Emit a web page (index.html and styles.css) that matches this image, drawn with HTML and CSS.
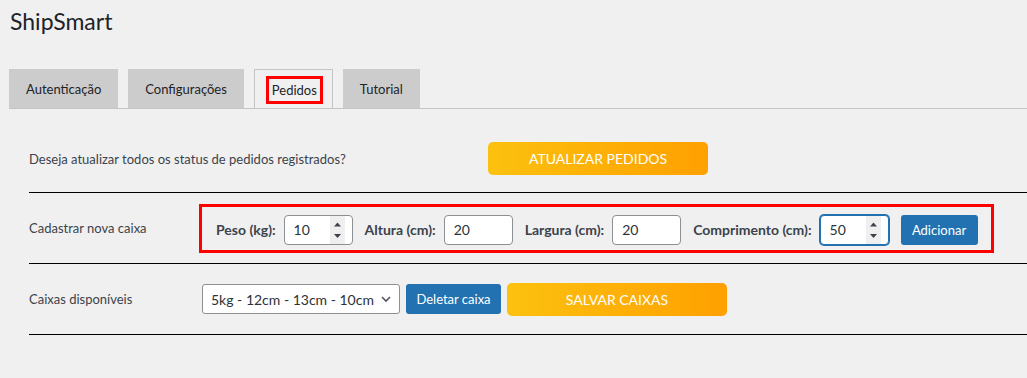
FILE: index.html
```html
<!DOCTYPE html>
<html lang="pt-BR">
<head>
    <meta charset="UTF-8">
    <title>ShipSmart</title>
    <link rel="stylesheet" href="styles.css">
</head>
<body>
    <div class="wrap">
        <h1 class="page-title">ShipSmart</h1>

        <nav class="tabs">
            <a class="tab" href="#">Autenticação</a>
            <a class="tab" href="#">Configurações</a>
            <a class="tab tab-active" href="#"><span class="mark">Pedidos</span></a>
            <a class="tab" href="#">Tutorial</a>
        </nav>

        <div class="rows">
            <div class="row row-update">
                <div class="row-label">Deseja atualizar todos os status de pedidos registrados?</div>
                <button class="btn-orange" type="button">Atualizar pedidos</button>
            </div>

            <div class="row">
                <div class="row-label">Cadastrar nova caixa</div>
                <div class="box-fields">
                    <label class="field">
                        <span>Peso (kg):</span>
                        <span class="num-box">
                            <input class="num-input" type="number" value="10">
                            <span class="spin">
                                <svg width="15" height="28" viewBox="0 0 15 28">
                                    <polygon points="4,10.5 11,10.5 7.5,6.5" fill="#3c434a"/>
                                    <polygon points="4,18 11,18 7.5,22" fill="#3c434a"/>
                                </svg>
                            </span>
                        </span>
                    </label>
                    <label class="field">
                        <span>Altura (cm):</span>
                        <span class="num-box">
                            <input class="num-input" type="number" value="20">
                        </span>
                    </label>
                    <label class="field">
                        <span>Largura (cm):</span>
                        <span class="num-box">
                            <input class="num-input" type="number" value="20">
                        </span>
                    </label>
                    <label class="field">
                        <span>Comprimento (cm):</span>
                        <span class="num-box num-focus">
                            <input class="num-input" type="number" value="50">
                            <span class="spin">
                                <svg width="15" height="28" viewBox="0 0 15 28">
                                    <polygon points="4,10.5 11,10.5 7.5,6.5" fill="#3c434a"/>
                                    <polygon points="4,18 11,18 7.5,22" fill="#3c434a"/>
                                </svg>
                            </span>
                        </span>
                    </label>
                    <button class="btn-blue btn-add" type="button">Adicionar</button>
                </div>
            </div>

            <div class="row">
                <div class="row-label">Caixas disponíveis</div>
                <div class="select-wrap">
                    <select class="boxes">
                        <option>5kg - 12cm - 13cm - 10cm</option>
                    </select>
                    <svg class="chevron" width="12" height="12" viewBox="0 0 12 12">
                        <path d="M2 4 L6 8 L10 4" fill="none" stroke="#50575e" stroke-width="1.6"/>
                    </svg>
                </div>
                <button class="btn-blue btn-delete" type="button">Deletar caixa</button>
                <button class="btn-orange btn-save" type="button">Salvar caixas</button>
            </div>
        </div>
    </div>
</body>
</html>
```

FILE: styles.css
```css
body {
    margin: 0;
    background-color: #f0f0f1;
    color: #3c434a;
    font-family: Lato, "Open Sans", sans-serif;
    font-size: 13px;
}

.wrap {
    padding-left: 9px;
}

.page-title {
    margin: 0;
    padding: 7px 0 0 1px;
    font-size: 23px;
    font-weight: 400;
    line-height: 29px;
    color: #1d2327;
}

.tabs {
    display: flex;
    gap: 10px;
    margin-top: 33px;
    border-bottom: 1px solid #c3c4c7;
}

.tab {
    display: flex;
    align-items: center;
    height: 39px;
    padding: 0 17px;
    box-sizing: border-box;
    background-color: #cccccc;
    color: #1d2327;
    font-size: 13px;
    text-decoration: none;
}

.tab-active {
    padding: 0 9px 0 11px;
    background-color: #f0f0f1;
    border: 1px solid #c3c4c7;
    border-bottom: none;
}

.mark {
    display: flex;
    align-items: center;
    height: 28px;
    margin-top: 2px;
    padding: 0 3px;
    box-sizing: border-box;
    border: 3px solid #ff0000;
}

.rows {
    margin: 16px 0 0 20px;
}

.row {
    display: flex;
    align-items: center;
    height: 70px;
    border-bottom: 1px solid #000;
}

.row-update {
    height: 67px;
}

.row-label {
    width: 170px;
    flex-shrink: 0;
}

.row-update .row-label {
    width: 459px;
}

.btn-orange {
    width: 220px;
    height: 33px;
    border: none;
    border-radius: 5px;
    background: linear-gradient(to right, #fcc10f, #ffa000);
    color: #fff;
    font-family: inherit;
    font-size: 14px;
    text-transform: uppercase;
    cursor: pointer;
}

.btn-blue {
    height: 30px;
    padding: 0 10px;
    border: none;
    border-radius: 3px;
    background-color: #2271b1;
    color: #fff;
    font-family: inherit;
    font-size: 13px;
    cursor: pointer;
}

.box-fields {
    display: flex;
    align-items: center;
    gap: 12px;
    height: 49px;
    padding: 3px 13px 0 14px;
    box-sizing: border-box;
    border: 3px solid #ff0000;
}

.field {
    display: flex;
    align-items: center;
    gap: 8px;
    font-size: 14px;
    font-weight: 700;
}

.num-box {
    display: flex;
    align-items: stretch;
    width: 69px;
    height: 30px;
    padding: 0 7px 0 0;
    box-sizing: border-box;
    border: 1px solid #8c8f94;
    border-radius: 4px;
    background-color: #fff;
}

.num-input {
    flex: 1;
    min-width: 0;
    padding: 0 0 0 9px;
    border: none;
    outline: none;
    background: transparent;
    color: #2c3338;
    font-family: inherit;
    font-size: 14px;
    font-weight: 400;
    appearance: textfield;
}

.num-input::-webkit-inner-spin-button {
    display: none;
}

.spin {
    width: 15px;
    background-color: #efefef;
}

.spin svg {
    display: block;
}

.num-focus {
    border-color: #2271b1;
    box-shadow: 0 0 0 1px #2271b1;
}

.btn-add {
    width: 77px;
    padding: 0;
}

.select-wrap {
    position: relative;
    margin-left: 3px;
}

.boxes {
    width: 198px;
    height: 30px;
    padding: 0 24px 0 8px;
    border: 1px solid #8c8f94;
    border-radius: 3px;
    background-color: #fff;
    color: #2c3338;
    font-family: inherit;
    font-size: 14px;
    appearance: none;
}

.chevron {
    position: absolute;
    right: 8px;
    top: 9px;
    pointer-events: none;
}

.btn-delete {
    width: 95px;
    margin-left: 6px;
    padding: 0;
}

.btn-save {
    margin-left: 6px;
}
```
